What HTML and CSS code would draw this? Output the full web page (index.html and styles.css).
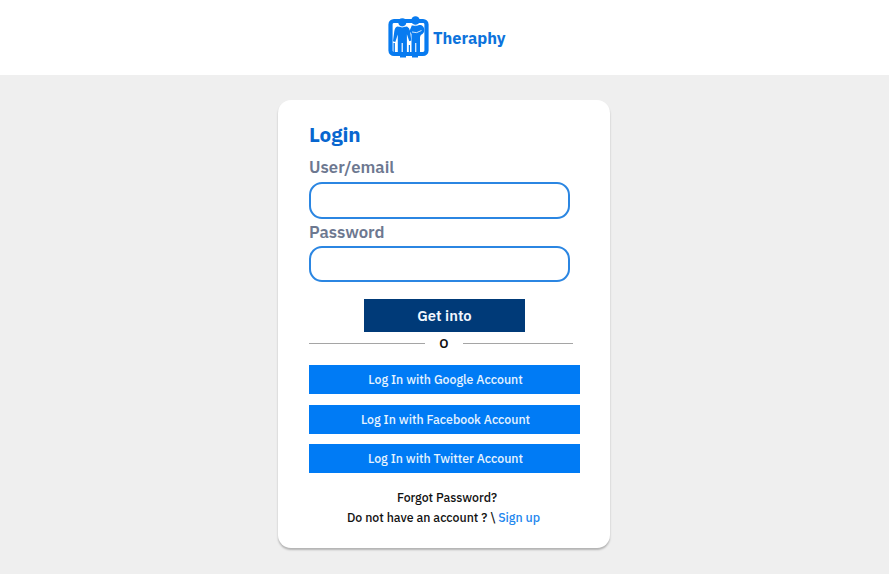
FILE: index.html
```html
<!DOCTYPE html>
<html lang="en">
<head>
<meta charset="utf-8">
<title>Theraphy – Login</title>
<link rel="stylesheet" href="styles.css">
</head>
<body>
<header class="header">
  <svg class="logo" width="41" height="42" viewBox="0 0 41 42" aria-hidden="true">
    <rect x="2.500" y="5" width="36" height="33" rx="3.500" fill="#fff" stroke="#087bf0" stroke-width="4.200"/>
    <g fill="#087bf0">
      <circle cx="14.300" cy="6.300" r="4"/>
      <path d="M9.500 10.500h9.500q2.500 1 3 4.500l1.300 9.500-2 .7-2.400-7V39h-4.100V27h-1.200v12H9.800V18.500L7.300 26l-2.300-.7 1.300-10q.5-4 3.200-4.800z"/>
      <circle cx="27.500" cy="4.500" r="4.300"/>
      <path d="M24 9h9q3 1 3.300 4.500t-3.500 5.500l-.8 2V40h-3.700V27h-1.100v13h-3.700V18l-2-3z"/>
      <path d="M5.500 27h1.400v10H5.500zM20.800 29h1.200v8h-1.200z"/>
      <path d="M12 37h6v4.500h-6zM24 37h6v4.500h-6z"/>
    </g>
    <path d="M24 16q4.500 2 9.500-1.500M10 9.800q4 2.500 8.500 0M24 9q3 1.300 6.500 0" fill="none" stroke="#fff" stroke-width=".8"/>
  </svg>
  <span class="brand">Theraphy</span>
</header>
<main class="page">
  <form class="card">
    <h1 class="title">Login</h1>
    <label class="label label-user" for="user">User/email</label>
    <input class="field" id="user" type="text">
    <label class="label label-password" for="password">Password</label>
    <input class="field" id="password" type="password">
    <button class="submit" type="button">Get into</button>
    <div class="divider"><span>O</span></div>
    <div class="socials">
      <button class="social google" type="button">Log In with Google Account</button>
      <button class="social facebook" type="button">Log In with Facebook Account</button>
      <button class="social twitter" type="button">Log In with Twitter Account</button>
    </div>
    <div class="links">
      <span class="forgot">Forgot Password?</span>
      <span class="signup">Do not have an account ? \ <a>Sign up</a></span>
    </div>
  </form>
</main>
</body>
</html>
```
FILE: styles.css
```css
* { box-sizing: border-box; }
body {
  margin: 0;
  min-height: 574px;
  background: #efefef;
  font-family: "IBM Plex Sans", Roboto, "Liberation Sans", sans-serif;
}
.header {
  display: flex;
  height: 75px;
  padding: 16px 0 0 388px;
  background: #fff;
}
.logo { flex: none; overflow: visible; }
.brand {
  margin-left: 4px;
  font-size: 16.400px;
  line-height: 44px;
  font-weight: 700;
  color: #0d73dc;
}
.page { padding: 25px 0 0 278px; }
.card {
  display: flex;
  flex-direction: column;
  width: 332px;
  height: 448px;
  padding: 22px 30px 0 31px;
  border-radius: 13px;
  background: #fff;
  box-shadow: 0 2px 2px rgba(0, 0, 0, .25);
}
.title {
  margin: 0;
  font-size: 20.700px;
  line-height: 25px;
  font-weight: 700;
  letter-spacing: -.15px;
  color: #0866cf;
}
.label {
  font-size: 16.700px;
  font-weight: 600;
  line-height: 22px;
  color: #6d7890;
}
.label-user { margin: 9px 0 4px; }
.label-password { margin: 2px 0 3px; }
.field {
  width: 261px;
  height: 37px;
  padding: 0 12px;
  border: 2px solid #2b86e2;
  border-radius: 13px;
  background: #fff;
  outline: 0;
}
#password { height: 36px; }
.submit {
  width: 161px;
  height: 33px;
  margin: 17px 0 0 55px;
  padding: 1px 0 0;
  border: 0;
  background: #003a78;
  color: #f2f7ff;
  font: 600 14.800px/32px "IBM Plex Sans", Roboto, sans-serif;
}
.divider {
  display: flex;
  align-items: center;
  width: 264px;
  height: 23px;
  font-size: 13px;
  font-weight: 600;
  color: #111;
}
.divider::before, .divider::after {
  content: "";
  height: 1px;
  background: #a5a5a5;
}
.divider::before { width: 116px; }
.divider::after { width: 110px; }
.divider span { width: 38px; text-align: center; }
.socials {
  display: flex;
  flex-direction: column;
  gap: 10.500px;
  margin-top: 10px;
}
.social {
  width: 271px;
  height: 29px;
  padding: 0 0 1px 2px;
  border: 0;
  background: #007bf5;
  color: #e6f3ff;
  font: 500 12.350px/28px "IBM Plex Sans", Roboto, sans-serif;
}
.links {
  display: flex;
  flex-direction: column;
  align-items: center;
  margin-top: 14px;
  font-size: 12.350px;
  line-height: 20px;
  font-weight: 500;
  color: #111;
}
.forgot { padding-left: 5px; }
.signup { margin-left: -2px; white-space: pre; }
.signup a { color: #2387ee; }
```
